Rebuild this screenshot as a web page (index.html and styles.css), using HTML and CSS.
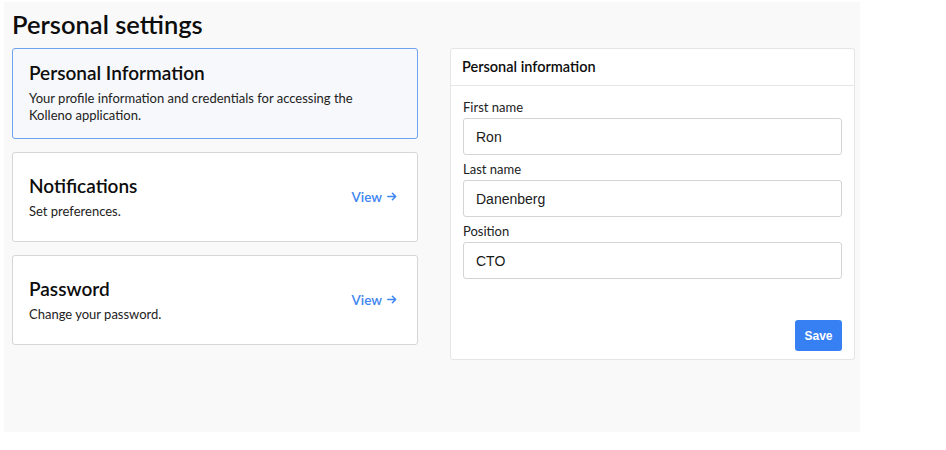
FILE: index.html
```html
<!DOCTYPE html>
<html>
<head>
<meta charset="utf-8">
<link rel="stylesheet" href="styles.css">
</head>
<body>
<div class="page">
  <h1 class="page-title">Personal settings</h1>
  <div class="layout">
    <div class="cards">
      <div class="card card-active">
        <div class="card-text">
          <h2 class="card-title">Personal Information</h2>
          <p class="card-desc">Your profile information and credentials for accessing the Kolleno application.</p>
        </div>
      </div>
      <div class="card">
        <div class="card-text">
          <h2 class="card-title">Notifications</h2>
          <p class="card-desc">Set preferences.</p>
        </div>
        <a class="view-link">View <svg class="arrow" width="10" height="9" viewBox="0 0 10 9"><path d="M0.8 4.5H8.6M5.4 1.2L8.7 4.5L5.4 7.8" fill="none" stroke="currentColor" stroke-width="1.5" stroke-linecap="round" stroke-linejoin="round"/></svg></a>
      </div>
      <div class="card">
        <div class="card-text">
          <h2 class="card-title">Password</h2>
          <p class="card-desc">Change your password.</p>
        </div>
        <a class="view-link">View <svg class="arrow" width="10" height="9" viewBox="0 0 10 9"><path d="M0.8 4.5H8.6M5.4 1.2L8.7 4.5L5.4 7.8" fill="none" stroke="currentColor" stroke-width="1.5" stroke-linecap="round" stroke-linejoin="round"/></svg></a>
      </div>
    </div>
    <div class="panel">
      <div class="panel-header">Personal information</div>
      <div class="panel-body">
        <div class="field">
          <label class="field-label">First name</label>
          <div class="field-input">Ron</div>
        </div>
        <div class="field">
          <label class="field-label">Last name</label>
          <div class="field-input">Danenberg</div>
        </div>
        <div class="field">
          <label class="field-label">Position</label>
          <div class="field-input">CTO</div>
        </div>
        <div class="actions">
          <button class="save-btn">Save</button>
        </div>
      </div>
    </div>
  </div>
</div>
</body>
</html>
```

FILE: styles.css
```css
html, body {
  margin: 0;
  padding: 0;
  background: #ffffff;
}
body {
  font-family: Lato, "Noto Sans", sans-serif;
  color: #111;
}
.page {
  margin: 2px 0 0 4px;
  width: 856px;
  height: 430px;
  box-sizing: border-box;
  padding: 6px 8px 0 8px;
  background: #f9f9f9;
}
.page-title {
  margin: 0 0 8px 0;
  font-size: 25.5px;
  line-height: 32px;
  font-weight: 600;
  color: #0d0d0d;
}
.layout {
  display: grid;
  grid-template-columns: 406px 405px;
  column-gap: 32px;
  align-items: start;
}
.cards {
  display: flex;
  flex-direction: column;
  gap: 13px;
}
.card {
  display: flex;
  align-items: center;
  min-height: 90px;
  box-sizing: border-box;
  padding: 12px 20px 13px 16px;
  background: #ffffff;
  border: 1px solid #d6d6d6;
  border-radius: 3px;
}
.card-active {
  padding-bottom: 14px;
  background: #f6f8fb;
  border-color: #6ea2ef;
}
.card-text {
  flex: 1;
  max-width: 345px;
}
.card-title {
  margin: 0 0 5px 0;
  font-size: 19px;
  line-height: 24px;
  font-weight: 600;
  color: #0d0d0d;
}
.card-desc {
  margin: 0;
  font-size: 13px;
  line-height: 17px;
  color: #222;
}
.view-link {
  display: flex;
  align-items: center;
  gap: 5px;
  font-size: 13.5px;
  font-weight: 600;
  color: #3d85f1;
}
.arrow {
  display: block;
}
.panel {
  background: #ffffff;
  border: 1px solid #e6e6e6;
  border-radius: 3px;
}
.panel-header {
  height: 37px;
  box-sizing: border-box;
  padding: 9px 11px 0 11px;
  border-bottom: 1px solid #e6e6e6;
  font-size: 14.5px;
  line-height: 18px;
  font-weight: 600;
  color: #0d0d0d;
}
.panel-body {
  padding: 11px 12px 8px 12px;
}
.field {
  margin-bottom: 4px;
}
.field-label {
  display: block;
  font-size: 13px;
  line-height: 20px;
  margin-bottom: 1px;
  color: #222;
}
.field-input {
  height: 37px;
  box-sizing: border-box;
  border: 1px solid #d4d4d4;
  border-radius: 3px;
  padding: 0 12px;
  display: flex;
  align-items: center;
  font-family: "Liberation Sans", Arial, sans-serif;
  font-size: 14px;
  color: #1a1a1a;
  background: #ffffff;
}
.actions {
  display: flex;
  justify-content: flex-end;
  margin-top: 41px;
}
.save-btn {
  width: 47px;
  height: 31px;
  border: none;
  border-radius: 3px;
  background: #3780f3;
  color: #ffffff;
  font-family: "Liberation Sans", Arial, sans-serif;
  font-size: 12px;
  font-weight: 700;
  padding: 0;
}
```
